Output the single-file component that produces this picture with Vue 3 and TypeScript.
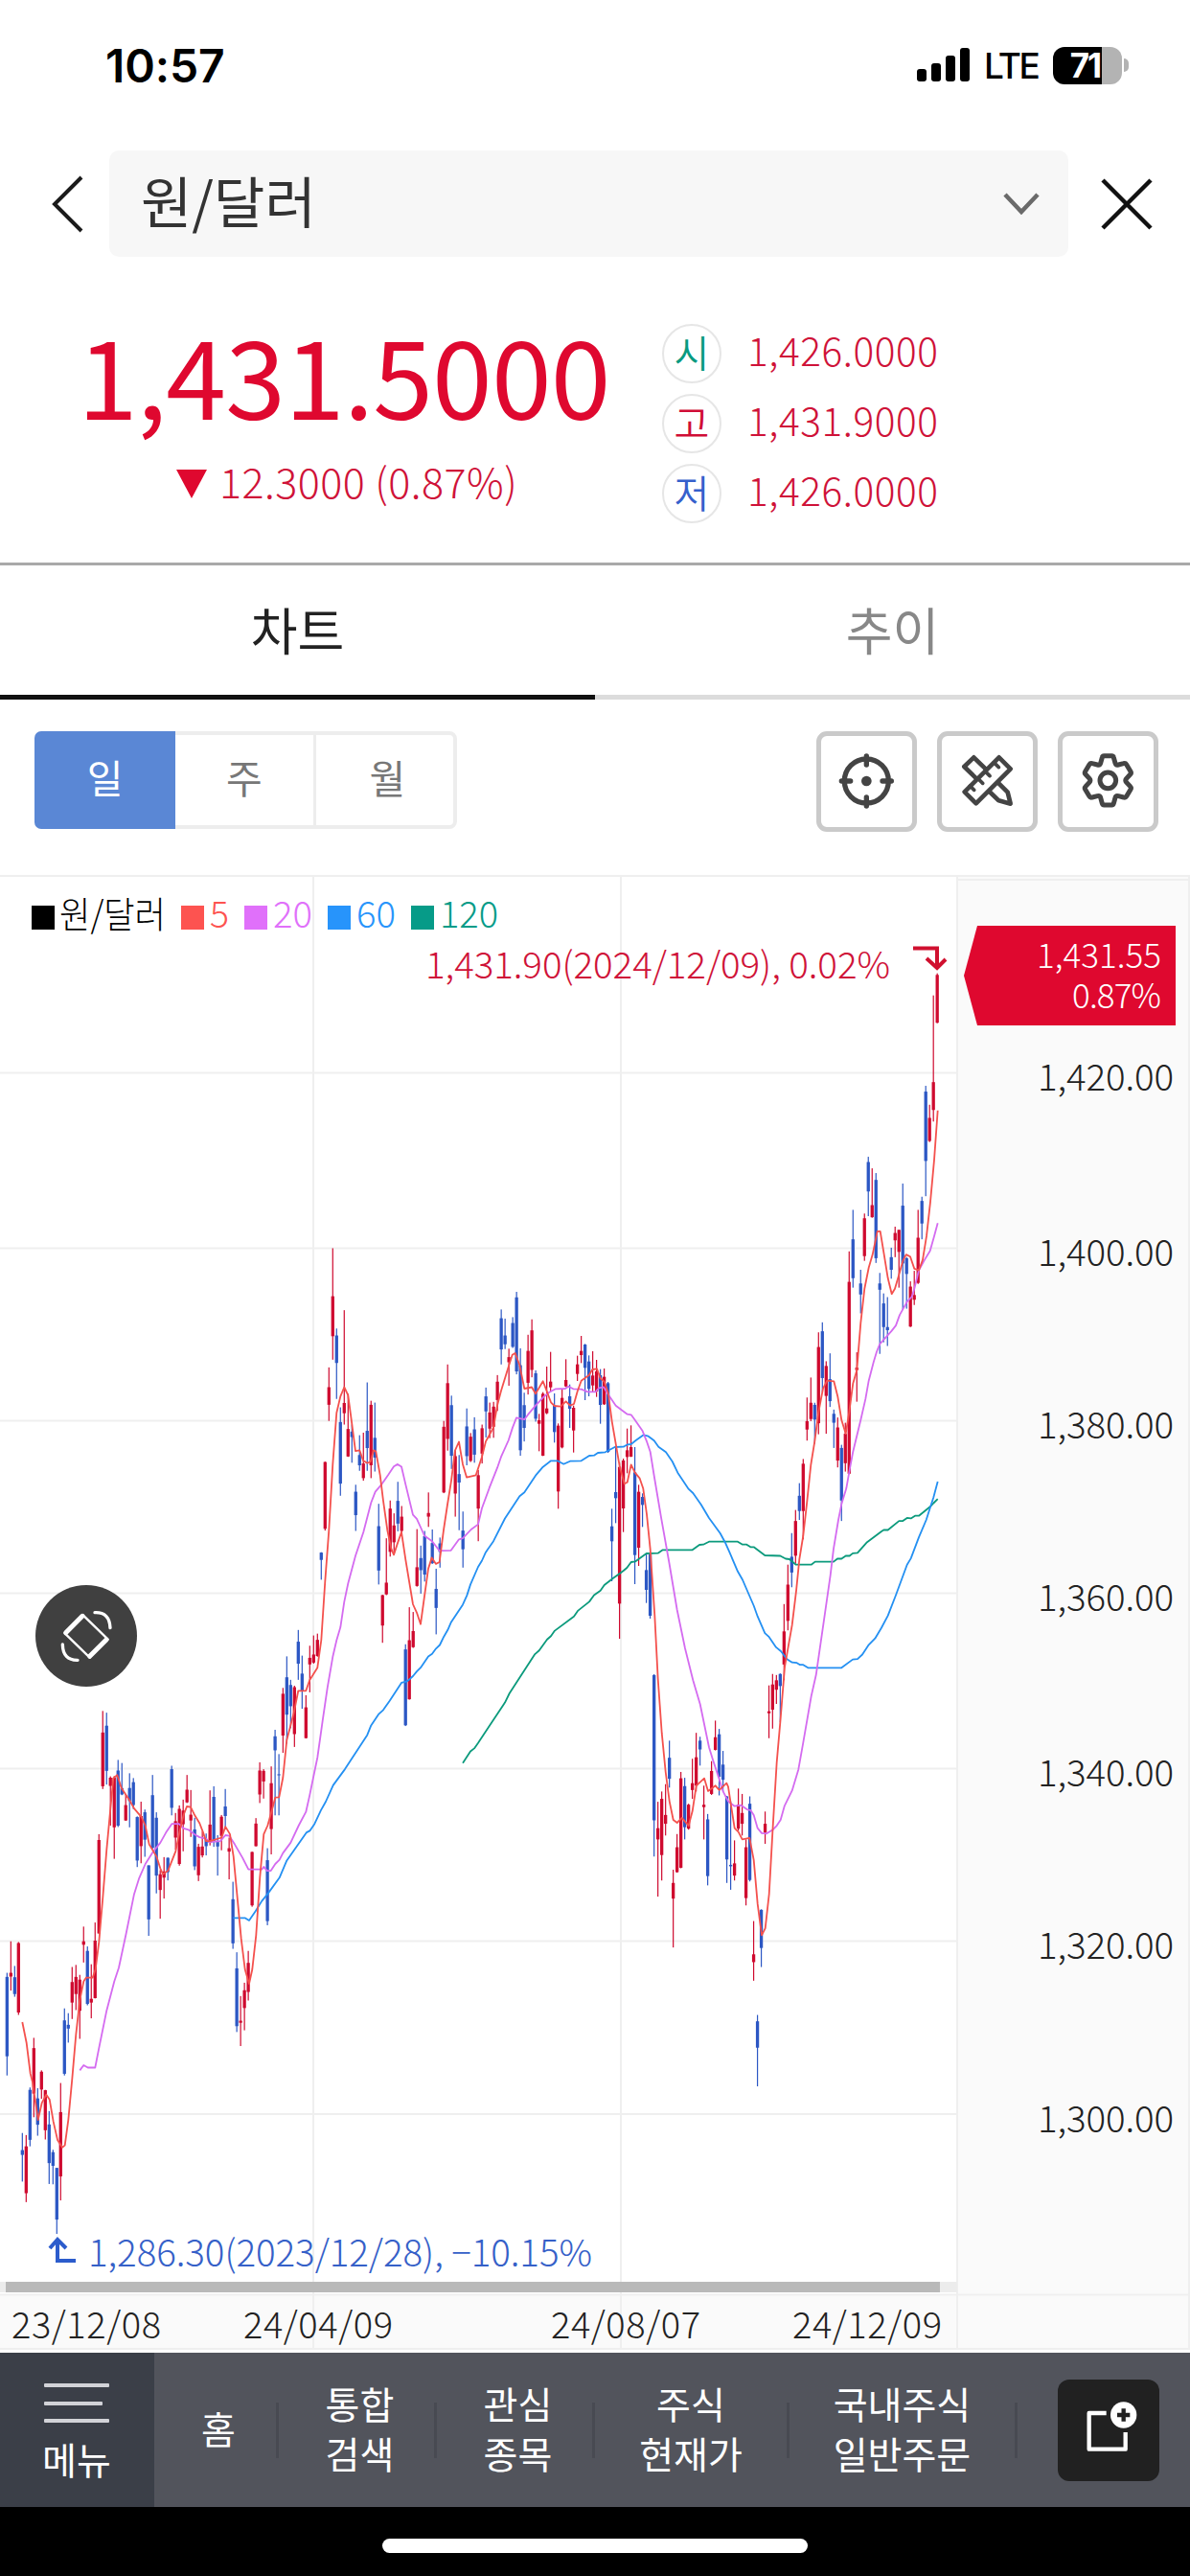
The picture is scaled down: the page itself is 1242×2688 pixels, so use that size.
<script setup lang="ts">
interface Block {
  x: number
  y: number
  sy: number
}

// Each session block has its own origin and vertical resolution; the horizontal one is shared.
const blocks: Record<string, Block> = {
  a: { x: 0, y: 1780, sy: 2.8 },
  b: { x: 200, y: 1260, sy: 2.6133 },
  c: { x: 440, y: 1320, sy: 3 },
  d: { x: 620, y: 1400, sy: 1.96 },
  e: { x: 760, y: 980, sy: 1.8233 },
}

// first x, then one "direction high top bottom low" entry per trading day
const sessions: Record<string, [number, string]> = {
  a: [22, `B 780 792 1024 1080,R 688 780 791 832,B 760 793 842 850,R 690 693 896 903,B 1248 1298 1312 1390,R 1254 1287 1424 1450,B 1115 1122 1268 1287,R 970 1000 1133 1202,B 1117 1147 1224 1256,R 1065 1069 1121 1148,R 1122 1123 1240 1267,B 1184 1223 1336 1397,B 1297 1304 1344 1398,B 1350 1350 1501 1543,R 1102 1187 1375 1445,B 884 919 1075 1080,B 898 932 943 984,R 763 807 867 915,R 757 792 842 889,R 786 800 891 973,R 645 688 698 750,B 703 716 871 875,R 755 856 867 913,R 633 686 854 855,R 375 392 665 666,R 15 78 235 243,B 20 58 190 230,R 206 210 234 350,R 205 210 355 447,B 158 189 350 354,B 167 240 259 261,R 258 290 335 336,B 197 240 278 355,B 211 223 290 302,B 323 325 452 471,R 280 322 410 460,B 303 311 391 441,B 466 466 624 672,B 202 261 415 418,B 311 327 496 548,R 480 492 538 622,R 442 484 502 563,B 443 444 486 510,B 175 185 298 320,R 313 337 385 420,R 291 301 462 467,R 274 306 346 425,R 202 245 282 284,R 246 318 335 383,B 327 361 469 480,R 403 412 495 512,R 367 411 437 443,B 373 389 410 437,R 247 347 400 408,B 235 266 398 412,B 378 398 411 496,R 319 324 380 422,B 243 294 322 360,R 385 416 426 507,B 514 565 694 710,B 720 767 936 953,R 848 920 926 994,R 809 831 883 948,R 716 751 836 861,R 426 427 583 587,R 328 344 410 411,R 165 189 259 284,R 185 190 221 271,B 416 451 629 641,R 177 226 360 434,B 70 89 130 320,B 141 200 203 320`],
  b: [286, `R 1310 1326 1440 1487,B 1224 1281 1383 1462,B 1288 1302 1360 1420,R 1304 1308 1436 1471,B 1152 1184 1244 1288,B 1222 1271 1318 1367,R 1330 1363 1447 1448,R 1195 1228 1246 1322,R 1167 1219 1241 1244,R 1162 1179 1223 1225,B 940 941 961 1015,R 693 694 876 881,R 436 490 538 582,R 111 242 351 415,B 330 349 424 522,B 545 585 753 786,R 280 533 561 592,R 508 604 679 680,B 592 611 626 696,B 756 775 839 882,B 621 675 703 718,R 614 698 738 745,B 477 609 656 718,R 527 538 703 738,B 532 628 682 720,B 808 869 990 1028,R 1056 1057 1140 1187,R 902 1023 1055 1057,R 799 821 939 952,R 834 867 913 943,B 748 800 862 883,R 814 843 882 887,B 1191 1205 1412 1414,R 1090 1180 1341 1342,R 1103 1155 1199 1201,R 877 981 1032 1034,B 922 956 989 1053,B 882 896 1001 1020,R 777 833 843 871,B 878 915 970 972,B 985 1040 1092 1164,B 900 916 939 982,R 582 598 777 779,R 428 479 631 663,B 513 539 677 713,R 662 678 780 843,B 675 727 750 880,B 829 881 932 982,B 548 597 678 703,R 615 625 691 694,B 572 605 674 696,R 716 730 821 910,R 592 602 671 698,B 491 515 556 627,R 532 559 603 629,R 530 543 598 628,R 457 475 525 555,B 278 302 387 428,B 303 349 373 386,R 385 408 422 486,B 299 315 380 383,B 230 245 447 455,B 384 430 662 677,B 505 539 601 638,R 347 391 478 510,R 305 335 443 463,B 444 452 576 584`],
  c: [368, `R 466 486 497 583,R 398 403 597 598,R 318 449 464 467,R 272 365 383 396,B 402 440 523 556,R 496 503 709 763,R 388 416 571 574,R 295 360 380 382,B 374 411 450 510,R 440 447 518 587,R 284 311 341 363,R 222 269 282 307,B 247 249 322 423,B 283 302 388 411,R 270 346 377 396,R 297 333 396 413,B 326 345 438 497,R 324 350 436 438,B 366 370 585 588,B 763 818 865 990,B 570 711 730 808,R 618 632 1060 1170,R 606 612 762 836,R 512 580 601 652,R 502 570 600 601,B 570 649 908 999,R 688 710 885 942,B 715 726 751 820,B 903 955 1017 1058,B 902 905 1098 1107`],
  d: [188, `B 680 682 979 1053,R 941 995 1018 1135,R 920 935 1050 1102,R 905 968 986 1010,B 816 851 894 912,R 1080 1107 1139 1239,R 1007 1034 1085 1086,R 880 893 1076 1077,B 892 909 993 1018,R 945 947 996 998,R 853 903 917 935,R 800 850 908 920,B 808 816 834 867,R 908 947 952 1018,B 966 977 1093 1112,R 858 878 925 927,R 775 809 835 836,B 792 803 890 928,B 837 865 896 920,B 929 930 1059 1107,B 940 1070 1073 1121,R 1020 1067 1092 1102,R 914 947 996 1000,R 925 964 986 1010,R 1018 1034 1138 1153,B 930 945 1101 1104,R 1185 1253 1269 1307,B 1377 1390 1444 1523,B 1161 1162 1240 1279,R 961 986 1004 1027,R 703 756 760 811`],
  e: [139, `R 1398 1418 1466 1502,R 1400 1410 1428 1455,B 1397 1398 1421 1490,R 1265 1317 1380 1410,R 1190 1228 1297 1315,B 1130 1175 1205 1233,R 1086 1107 1173 1188,B 1035 1059 1088 1105,R 989 998 1088 1142,R 872 917 933 954,R 834 882 913 917,B 882 886 914 960,R 748 776 921 942,B 729 746 835 862,R 803 812 869 941,B 788 837 879 890,B 895 903 920 968,R 910 929 992 1005,B 962 968 1068 1107,R 920 941 997 1013,R 594 652 1017 1018,B 515 571 645 663,R 786 815 820 880,B 629 655 676 712,R 522 531 603 612,B 414 424 480 527,R 436 506 529 530,B 445 458 607 616,B 635 655 667 789,B 674 693 738 767,B 681 738 744 774,B 587 605 629 646,R 547 559 573 605,R 553 553 595 663,B 465 507 617 705,B 605 607 637 703,R 651 661 737 738,R 631 677 686 696,R 515 568 654 656,B 490 498 541 571,B 279 290 422 489,R 315 340 384 386,R 107 272 325 347,R 65 68 159 160`],
}

const candles = Object.entries(sessions).flatMap(([key, [start, rows]]) => {
  const b = blocks[key]
  return rows.split(',').map((row, i) => {
    const [dir, ...v] = row.split(' ')
    const [high, top, bottom, low] = v.map((n) => b.y + Number(n) / b.sy)
    return { x: b.x + (start + i * 11.99) / 3, high, top, bottom, low, color: dir === 'R' ? '#cf0a2f' : '#2c57c4' }
  })
})

const averages: { color: string; parts: [string, string][] }[] = [
  {
    color: '#0b9a7c',
    parts: [
      ['b', '849,1515 873,1483 885,1475 897,1460 981,1350 995,1325 1075,1218 1088,1208 1113,1178 1125,1169 1137,1154 1197,1115 1209,1100 1245,1075 1260,1057'],
      ['c', '560,1019 572,1002 600,980 620,966 632,957 643,948 656,930 670,928 704,903 740,902 755,892 848,892 870,876 882,875 900,866'],
      ['d', '360,409 450,409 465,415 478,415 490,420 500,420 535,437 583,438 600,444 612,445 632,456 680,456 692,450 750,450 762,444 775,444 788,438 800,438 810,433 825,432 855,410 900,388'],
      ['e', '487,1124 500,1124 535,1107 547,1107 560,1101 572,1102 585,1097 597,1097 632,1080 643,1073 656,1065'],
    ],
  },
  {
    color: '#2490f2',
    parts: [
      ['a', '730,620 768,620 780,627 800,600 820,570 838,550 875,502 898,452 960,370 970,365 985,345 1005,305 1020,280 1043,232 1080,185 1150,85 1162,57 1185,25 1200,12'],
      ['b', '620,1345 657,1296 675,1292 693,1278 705,1265 717,1255 741,1224 753,1217 765,1203 777,1193 790,1170 802,1152 813,1130 849,1083 862,1058 873,1028 897,980 909,963 921,940 945,910 981,848 1027,787 1042,777 1077,731'],
      ['c', '380,632 405,613 425,613 445,623 465,614 500,613 525,597 540,596 552,588 575,586 605,570 632,569 645,562 656,561 670,550 695,532 710,536 728,550 742,569 765,586 785,615 802,650 835,700 850,714 875,750 900,792'],
      ['d', '395,392 410,410 425,432 450,470 465,487 500,540 512,562 535,596 548,604 570,625 585,633 605,650 620,656 635,657 645,661 655,661 670,667 775,667 810,650 825,649 840,640 860,620 880,607 900,585'],
      ['e', '500,1287 525,1248 560,1190 572,1178 597,1138 620,1105 632,1082 643,1062 656,1032'],
    ],
  },
  {
    color: '#d46bf0',
    parts: [
      ['a', '250,1065 262,1050 275,1057 298,1057 310,1000 334,890 358,805 372,765 394,670 420,550 435,505 455,462 478,428 502,400 520,370 538,345 560,345 575,358 590,362 610,376 625,384 645,388 655,398 690,395 706,378 718,380 735,405 760,445 778,478 820,478 826,470 836,482 848,482 862,462 875,450 886,430 910,400 935,350 958,310 970,260 982,205'],
      ['b', '394,1500 410,1400 425,1310 442,1225 454,1180 466,1145 478,1075 490,1025 513,950 538,885 562,805 575,775 593,757 615,730 633,706 645,700 657,707 670,755 693,838 705,849 729,895 753,910 776,936 812,935 837,905 849,902 875,878 897,864 909,820 932,765 957,710 969,680 992,635 1005,600 1017,573 1042,578 1053,565 1077,540'],
      ['c', '380,415 400,398 420,388 450,387 460,380 475,388 500,389 520,397 545,397 555,385 570,382 584,405 608,440 644,467 656,469 668,485 692,520 704,550 716,585 728,660 750,790 775,930 800,1080 825,1200 850,1300 872,1375 900,1510'],
      ['d', '372,855 392,895 404,920 420,940 440,950 460,948 480,957 490,958 500,968 512,995 525,1005 540,1006 560,998 572,990 584,978 596,950 620,918 640,875 655,820 680,725'],
      ['e', '275,1400 300,1295 320,1210 330,1160 345,1105 355,1075 370,1045 380,1010 391,975 415,915 430,875 440,840 455,805 465,785 475,770 490,760 512,745 525,735 537,715 560,690 575,680 583,665 597,630 615,610 632,593 645,565 656,540'],
    ],
  },
  {
    color: '#f4514d',
    parts: [
      ['a', '70,924 83,985 95,1075 102,1100 113,1170 119,1210 131,1160 145,1136 155,1150 167,1215 180,1268 195,1290 203,1284 214,1210 226,1090 238,960 250,860 262,805 270,794 290,794 299,770 310,690 322,560 334,420 346,300 355,212 367,202 380,240 405,275 420,300 443,325 455,350 467,405 490,440 502,475 510,492 526,482 550,425 562,370 575,318 585,294 597,296 610,320 625,343 636,370 645,395 658,395 694,385 706,353 720,375 731,440 743,560 755,680 767,770 780,812 790,770 802,670 814,500 826,375 838,350 850,310 862,268 874,267 886,210 898,100'],
      ['b', '320,1378 334,1318 358,1318 370,1288 394,1255 406,1180 418,1020 430,880 442,700 454,560 466,515 478,490 490,512 502,590 513,664 526,662 537,690 550,697 560,693 570,662 577,665 590,730 600,800 613,880 625,930 633,947 645,915 657,885 670,960 693,1082 705,1105 717,1136 729,1060 741,985 752,955 765,972 776,967 789,880 801,810 813,745 825,662 837,639 849,700 861,736 890,730 909,680 921,638 945,600 957,540 969,500 990,440 1004,402 1013,397 1027,430 1042,494 1065,490 1077,508'],
      ['c', '380,364 392,395 405,430 416,441 435,443 452,427 465,440 477,435 488,395 500,362 524,345 535,327 549,325 560,355 572,365 584,400 596,490 608,560 620,630 635,685 644,680 656,625 668,650 683,668 694,700 705,780 716,890'],
      ['d', '190,560 200,690 212,800 224,880 236,940 248,978 260,984 275,974 296,990 308,960 320,908 345,893 357,919 380,908 392,917 415,903 420,910 428,945 440,995 452,1003 464,1018 487,1015 500,1060 512,1150 525,1214 536,1200 548,1130 560,990 572,860 584,770'],
      ['e', '177,1385 190,1340 200,1305 213,1240 223,1180 235,1135 247,1070 259,1000 271,955 283,900 297,855 310,840 331,841 343,870 355,915 368,941 379,900 391,845 403,820 415,730 427,665 440,625 452,600 467,556 476,556 488,600 500,645 512,675 522,665 535,638 547,612 557,600 570,604 583,627 597,630 609,610 621,565 633,500 645,420 656,326'],
    ],
  },
]

const lines = averages.map(({ color, parts }) => ({
  color,
  points: parts
    .flatMap(([key, pts]) => {
      const b = blocks[key]
      return pts.split(' ').map((p) => {
        const [x, y] = p.split(',').map(Number)
        return `${(b.x + x / 3).toFixed(1)},${(b.y + y / b.sy).toFixed(1)}`
      })
    })
    .join(' '),
}))

const grid = [
  { y: 1119.5, label: '1,420.00' },
  { y: 1302.5, label: '1,400.00' },
  { y: 1482.5, label: '1,380.00' },
  { y: 1662.5, label: '1,360.00' },
  { y: 1845.5, label: '1,340.00' },
  { y: 2025.5, label: '1,320.00' },
  { y: 2206, label: '1,300.00' },
]

const dates = [
  { x: 14, label: '23/12/08' },
  { x: 256, label: '24/04/09' },
  { x: 577, label: '24/08/07' },
  { x: 829, label: '24/12/09' },
]

const legend = [
  { x: 33, tx: 62, w: 111, label: '원/달러', color: '#000' },
  { x: 189, tx: 219, w: 20, label: '5', color: '#fd5350' },
  { x: 255, tx: 285, w: 41, label: '20', color: '#e070fa' },
  { x: 342, tx: 372, w: 41, label: '60', color: '#2794fb' },
  { x: 429, tx: 459, w: 61, label: '120', color: '#069b88' },
]

const quotes = [
  { mark: '시', color: '#089a80', value: '1,426.0000' },
  { mark: '고', color: '#d00d36', value: '1,431.9000' },
  { mark: '저', color: '#3560cc', value: '1,426.0000' },
]

const nav = [
  { w: 130, rows: ['홈'] },
  { w: 165, rows: ['통합', '검색'] },
  { w: 165, rows: ['관심', '종목'] },
  { w: 203, rows: ['주식', '현재가'] },
  { w: 238, rows: ['국내주식', '일반주문'] },
]
</script>

<template>
  <main class="screen">
    <header class="status">
      <span class="clock">10:57</span>
      <div class="radio">
        <svg class="signal" width="55" height="36" viewBox="0 0 55 36">
          <rect x="0" y="22" width="10" height="13" rx="3" />
          <rect x="15" y="16" width="10" height="19" rx="3" />
          <rect x="30" y="8" width="10" height="27" rx="3" />
          <rect x="45" y="0" width="10" height="35" rx="3" />
        </svg>
        <span class="lte">LTE</span>
        <div class="battery"><span>71</span></div>
        <i class="nub"></i>
      </div>
    </header>

    <div class="titlebar">
      <svg class="back" width="36" height="62" viewBox="0 0 36 62"><path d="M32 3 4 31l28 28" fill="none" stroke="#1b1b1b" stroke-width="4" /></svg>
      <div class="picker">
        <span>원/달러</span>
        <svg width="38" height="26" viewBox="0 0 38 26"><path d="m2 3 17 18L36 3" fill="none" stroke="#6a6a6a" stroke-width="4.5" /></svg>
      </div>
      <svg class="close" width="54" height="54" viewBox="0 0 54 54"><path d="m2 2 50 50M52 2 2 52" fill="none" stroke="#111" stroke-width="4.5" /></svg>
    </div>

    <section class="quote">
      <div class="last">
        <strong>1,431.5000</strong>
        <div class="change">
          <svg width="32" height="30" viewBox="0 0 32 30"><path d="M0 0h32L16 30z" fill="#df082f" /></svg>
          <span>12.3000 (0.87%)</span>
        </div>
      </div>
      <ul class="ohl">
        <li v-for="q in quotes" :key="q.mark">
          <b :style="{ color: q.color }">{{ q.mark }}</b><span>{{ q.value }}</span>
        </li>
      </ul>
    </section>

    <nav class="tabs">
      <div class="tab on">차트</div>
      <div class="tab">추이</div>
    </nav>

    <div class="tools">
      <div class="period">
        <span class="on">일</span><span>주</span><span>월</span>
      </div>
      <div class="buttons">
        <div class="tool">
          <svg viewBox="0 0 315 315" fill="none" stroke="#444" stroke-width="16" stroke-linecap="round">
            <circle cx="157" cy="156" r="69" />
            <path d="M157 78v27M157 207v27M79 156h28M207 156h28" />
            <circle cx="157" cy="156" r="16" fill="#444" stroke="none" />
          </svg>
        </div>
        <div class="tool">
          <svg viewBox="0 0 315 315" fill="none" stroke="#444" stroke-width="14" stroke-linejoin="round">
            <path d="m194 82 36 36-108 108-36-36z" />
            <path d="M124 149 85 111l30-29 38 37" />
            <path d="m190 160 31 31 9 36-37-10-29-28" />
            <path d="m178 98 15 15M150 125l15 15M127 147l16 16M103 171l13 13" stroke-width="11" stroke-linecap="round" />
          </svg>
        </div>
        <div class="tool">
          <svg viewBox="0 0 315 315" fill="none" stroke="#444" stroke-width="15" stroke-linejoin="round">
            <path transform="translate(157 154)" d="M-12-77H12Q17-77 18-72L23-54Q25-47 33-49L49-53Q55-55 58-50L71-28Q74-23 70-19L58-6Q53 0 58 6L70 19Q74 23 71 28L58 50Q55 55 49 53L33 49Q25 47 23 54L18 72Q17 77 12 77H-12Q-17 77-18 72L-23 54Q-25 47-33 49L-49 53Q-55 55-58 50L-71 28Q-74 23-70 19L-58 6Q-53 0-58-6L-70-19Q-74-23-71-28L-58-50Q-55-55-49-53L-33-49Q-25-47-23-54L-18-72Q-17-77-12-77Z" />
            <circle cx="157" cy="154" r="25" />
          </svg>
        </div>
      </div>
    </div>

    <section class="chart">
      <svg width="1242" height="1542" viewBox="0 913 1242 1542">
        <rect x="999" y="913" width="243" height="1539" fill="#fafafa" />
        <rect x="0" y="2395" width="1242" height="57" fill="#fafafa" />
        <g stroke="#efefef" stroke-width="2" fill="none">
          <path d="M0 914H1242M327 914V2452M648 914V2452M999 914V2452M1241 914V2452M0 2394.5H1242M0 2451H1242M999 918H1242" />
          <path v-for="g in grid" :key="g.y" :d="`M0 ${g.y}H999`" />
        </g>
        <g v-for="(c, i) in candles" :key="i">
          <rect :x="c.x - 0.6" :y="c.high" width="1.2" :height="c.low - c.high" :fill="c.color" />
          <rect :x="c.x - 1.65" :y="c.top" width="3.3" :height="Math.max(c.bottom - c.top, 1)" :fill="c.color" />
        </g>
        <polyline v-for="l in lines" :key="l.color" :points="l.points" fill="none" :stroke="l.color" stroke-width="1.8" stroke-linejoin="round" />

        <g font-size="38">
          <g v-for="l in legend" :key="l.label" :fill="l.color">
            <rect :x="l.x" y="945" width="24" height="25" />
            <text :x="l.tx" y="968" :textLength="l.w" lengthAdjust="spacingAndGlyphs">{{ l.label }}</text>
          </g>
        </g>

        <text x="444" y="1020.5" font-size="38.5" textLength="485" fill="#cf1238">1,431.90(2024/12/09), 0.02%</text>
        <path d="M953 989.5H978V1011M967 1000l11 10 9-9" fill="none" stroke="#d0102f" stroke-width="4" />
        <text x="92" y="2365" font-size="38.5" textLength="526" fill="#3560c8">1,286.30(2023/12/28), −10.15%</text>
        <path d="M79 2359H60V2337M52 2346l8-9 9 9" fill="none" stroke="#2c5ccc" stroke-width="4" />

        <path d="M1006 1018 1020 966H1227V1070H1020Z" fill="#df082f" />
        <g font-size="35" fill="#fff" text-anchor="end">
          <text x="1212" y="1009.5" textLength="130">1,431.55</text>
          <text x="1212" y="1052" textLength="93">0.87%</text>
        </g>
        <g font-size="38.5" fill="#222" text-anchor="end">
          <text v-for="g in grid" :key="g.label" x="1225" :y="g.y + 18.5" textLength="142">{{ g.label }}</text>
        </g>

        <rect x="0" y="2381" width="999" height="11" fill="#ececec" />
        <rect x="6" y="2381" width="975" height="11" fill="#b9b9b9" />
        <g font-size="38" fill="#222">
          <text v-for="d in dates" :key="d.label" :x="d.x - 2" y="2439.5" textLength="156">{{ d.label }}</text>
        </g>
      </svg>
      <div class="rotate">
        <svg width="106" height="106" viewBox="0 0 318 318" fill="none" stroke="#fff">
          <path d="M95 149 147 97M170 223 222 171" stroke-width="15" stroke-linecap="round" />
          <path d="m92 151 78 76M149 94l78 76" stroke-width="7" stroke-linecap="round" />
          <path d="M186 86Q232 84 234 134M85 186Q86 236 132 235" stroke-width="10" stroke-linecap="round" />
        </svg>
      </div>
    </section>

    <footer class="nav">
      <div class="menu">
        <i></i><i class="short"></i><i></i>
        <span>메뉴</span>
      </div>
      <div v-for="n in nav" :key="n.rows[0]" class="item" :class="{ narrow: n.w < 200 }" :style="{ width: n.w + 'px' }">
        <span v-for="r in n.rows" :key="r">{{ r }}</span>
      </div>
      <div class="add">
        <svg width="106" height="106" viewBox="0 0 318 318">
          <path d="M152 105H98V218H212V165" fill="none" stroke="#fff" stroke-width="13" stroke-linejoin="round" />
          <circle cx="206" cy="111" r="41" fill="#fff" />
          <path d="M206 91v40M186 111h40" stroke="#212121" stroke-width="13" />
        </svg>
      </div>
    </footer>
    <div class="home"><i></i></div>
  </main>
</template>

<style>
body {
  margin: 0;
  background: #fff;
}
</style>

<style scoped>
.screen {
  width: 1242px;
  height: 2688px;
  display: flex;
  flex-direction: column;
  overflow: hidden;
  background: #fff;
  font-family: "Noto Sans CJK KR", "Noto Sans", sans-serif;
  font-weight: 300;
}
.screen > * {
  flex: none;
  box-sizing: border-box;
}
.status {
  height: 157px;
  padding: 0 64px 21px 110px;
  display: flex;
  align-items: center;
  justify-content: space-between;
  font-family: Inter, sans-serif;
  color: #000;
}
.clock {
  font-size: 48px;
  font-weight: 600;
  letter-spacing: -0.1px;
}
.radio {
  display: flex;
  align-items: center;
}
.lte {
  margin-left: 15px;
  width: 58px;
  font-size: 37px;
  font-weight: 500;
  letter-spacing: -2.6px;
  white-space: nowrap;
}
.battery {
  margin-left: 14px;
  width: 72px;
  height: 39px;
  border-radius: 12px;
  background: linear-gradient(90deg, #000 51px, #b3b3b3 51px);
  display: flex;
  align-items: center;
  justify-content: center;
  color: #fff;
  font-size: 35px;
  font-weight: 700;
  letter-spacing: -2px;
}
.battery span {
  margin-left: -5px;
}
.nub {
  margin-left: 2px;
  width: 5px;
  height: 14px;
  border-radius: 0 5px 5px 0;
  background: #b3b3b3;
}
.titlebar {
  height: 111px;
  padding: 0 39px 0 53px;
  display: flex;
  align-items: center;
}
.picker {
  margin-left: 25px;
  width: 1001px;
  height: 111px;
  box-sizing: border-box;
  padding: 0 30px 0 33px;
  border-radius: 10px;
  background: #f7f7f7;
  display: flex;
  align-items: center;
  justify-content: space-between;
  font-size: 58px;
  font-weight: 400;
  color: #333;
}
.picker span {
  line-height: 60px;
  margin-top: -9px;
}
.close {
  margin-left: 34px;
}
.quote {
  height: 319px;
  display: flex;
  color: #cf1238;
}
.last {
  width: 691px;
  box-sizing: border-box;
  padding: 61px 0 0 81px;
}
.last strong {
  display: block;
  font-size: 113px;
  line-height: 120px;
  font-weight: 400;
  letter-spacing: -0.9px;
  color: #df082f;
}
.change {
  margin: 28px 0 0 103px;
  display: flex;
  align-items: center;
  font-size: 43px;
  line-height: 56px;
  letter-spacing: 0.5px;
  white-space: pre;
}
.change span {
  margin: -4px 0 4px 13px;
}
.ohl {
  margin: 70px 0 0;
  padding: 0;
  list-style: none;
  display: flex;
  flex-direction: column;
  gap: 11px;
}
.ohl li {
  height: 62px;
  display: flex;
  align-items: center;
}
.ohl b {
  width: 62px;
  height: 62px;
  box-sizing: border-box;
  border: 2.5px solid #e6e6e6;
  border-radius: 50%;
  font-size: 40px;
  line-height: 55px;
  font-weight: 350;
  text-align: center;
}
.ohl span {
  margin: -10px 0 0 27px;
  font-size: 40.5px;
  letter-spacing: 0.6px;
}
.tabs {
  height: 143px;
  border-top: 3px solid #a9a9a9;
  display: flex;
}
.tab {
  flex: 1;
  box-sizing: border-box;
  border-bottom: 5px solid #dcdcdc;
  text-align: center;
  font-size: 53px;
  line-height: 132px;
  font-weight: 400;
  color: #888;
}
.tab.on {
  border-color: #111;
  color: #222;
}
.tools {
  height: 183px;
  padding: 33px 33px 0 36px;
  display: flex;
  align-items: flex-start;
  justify-content: space-between;
}
.period {
  width: 441px;
  height: 102px;
  box-sizing: border-box;
  border: 4px solid #ededed;
  border-radius: 8px;
  display: flex;
  font-size: 41px;
  line-height: 87px;
  font-weight: 400;
  text-align: center;
  color: #777;
}
.period span {
  flex: 1;
}
.period span + span + span {
  border-left: 3px solid #ededed;
  padding-left: 3px;
  margin-right: -3px;
}
.period .on {
  flex: none;
  width: 147px;
  margin: -4px 0 -4px -4px;
  padding-top: 4px;
  box-sizing: border-box;
  border-radius: 7px 0 0 7px;
  background: #5a87d5;
  color: #fff;
}
.buttons {
  display: flex;
  gap: 21px;
}
.tool {
  width: 105px;
  height: 105px;
  box-sizing: border-box;
  border: 5px solid #cacaca;
  border-radius: 11px;
}
.tool svg {
  display: block;
  width: 105px;
  height: 105px;
  margin: -5px;
}
.chart {
  height: 1542px;
  position: relative;
}
.chart > svg {
  display: block;
}
.rotate {
  position: absolute;
  left: 37px;
  top: 741px;
  width: 106px;
  height: 106px;
  border-radius: 50%;
  background: #404040;
}
.rotate svg {
  display: block;
}
.nav {
  height: 161px;
  background: #52545c;
  display: flex;
  align-items: center;
  color: #fff;
  font-size: 39px;
  font-weight: 400;
}
.menu {
  width: 161px;
  height: 161px;
  box-sizing: border-box;
  padding: 32px 0 0 44px;
  background: #3b3f48;
}
.menu i {
  display: block;
  width: 68px;
  height: 4px;
  margin: 0 0 14.5px 2px;
  border-radius: 1px;
  background: #d2d3d8;
}
.menu i.short {
  width: 61px;
}
.menu span {
  display: block;
  line-height: 50px;
  margin-top: -3px;
}
.item {
  display: flex;
  flex-direction: column;
  align-items: center;
  justify-content: center;
  height: 58px;
  padding-bottom: 6px;
  box-sizing: border-box;
  border-right: 3px solid #484a52;
  line-height: 52px;
  white-space: nowrap;
}
.item.narrow {
  padding-left: 7px;
}
.add {
  margin-left: 42px;
  width: 106px;
  height: 106px;
  border-radius: 12px;
  background: #212121;
}
.add svg {
  display: block;
}
.home {
  height: 72px;
  padding-top: 33px;
  background: #000;
}
.home i {
  display: block;
  width: 444px;
  height: 15px;
  margin: 0 auto;
  border-radius: 8px;
  background: #fff;
}
</style>
